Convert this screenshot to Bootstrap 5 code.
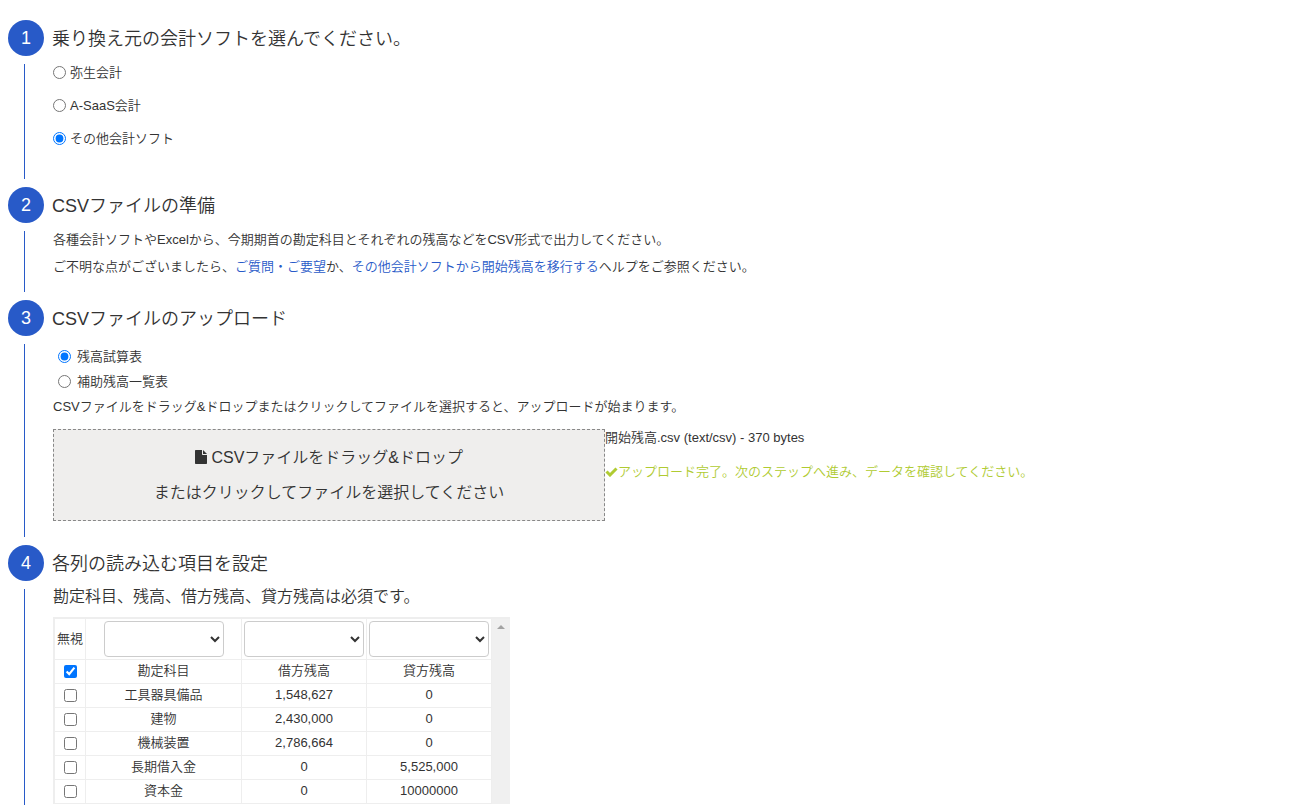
<!DOCTYPE html>
<html lang="ja">
<head>
<meta charset="utf-8">
<meta name="viewport" content="width=device-width, initial-scale=1">
<title>開始残高の移行</title>
<link href="https://cdn.jsdelivr.net/npm/bootstrap@5.3.0/dist/css/bootstrap.min.css" rel="stylesheet">
<style>
  :root { --brand: #285ac8; --line: #eee; --text-weight: 350; }
  body { font-family: "Liberation Sans", "Noto Sans CJK JP", sans-serif; font-size: 13px; font-weight: var(--text-weight); color: #333; background: #fff; }
  a { color: var(--brand); text-decoration: none; }
  input[type=radio], input[type=checkbox] { width: 13px; height: 13px; margin: 0; flex: none; accent-color: #0075ff; }
  .steps { padding: 20px 8px 0; }
  .step-rail { width: 36px; flex: none; }
  .step-number { width: 36px; height: 36px; background: var(--brand); color: #fff; font-size: 18px; }
  .step-line { width: 1px; margin: 8px 3px 8px 0; background: var(--brand); }
  .step:last-child .step-line { margin-bottom: 0; }
  .step-title { height: 36px; font-size: 18px; line-height: 38px; font-weight: var(--text-weight); margin: 0; padding-left: 8px; }
  .step-content { padding-left: 9px; }
  .software { padding-bottom: 32px; }
  .software label { height: 33px; }
  .prep { padding-top: 3px; padding-bottom: 20px; }
  .prep p { line-height: 27px; }
  .formats label, .hint { height: 25px; line-height: 25px; }
  .formats { padding: 8px 0 0 5px; }
  .formats label { gap: 6px; }
  .hint { margin-bottom: 10px; }
  .drop-zone { width: 552px; max-width: 100%; height: 92px; border: 1px dashed #888; background: #efeeed; color: #333; font-size: 16px; line-height: 35px; font-weight: var(--text-weight); }
  .drop-zone svg { vertical-align: -1px; }
  .upload-state { line-height: 18px; }
  .done { color: #b0cb32; }
  .required { font-size: 16px; line-height: 32px; }
  .preview { width: max-content; max-width: 100%; border: solid var(--line); border-width: 2px 0 0 1px; }
  .preview table { border-collapse: collapse; table-layout: fixed; width: 438px; line-height: 18px; text-align: center; }
  .preview th, .preview td { height: 24px; padding: 0; border: 1px solid var(--line); vertical-align: middle; font-weight: var(--text-weight); text-align: center; }
  .preview thead th { height: 40px; border-top: 0; }
  .preview tbody input { display: block; margin: 0 auto; }
  .preview select { display: block; width: 120px; height: 36px; margin: 0 auto; border: 1px solid #ccc; border-radius: 4px; background: #fff; color: #333; }
  .col-ignore { width: 31px; }
  .col-account { width: 156px; }
  .scroll-track { width: 18px; background: #f0f0f0; padding-top: 6px; }
</style>
</head>
<body>
<main class="steps d-flex flex-column min-vh-100">

  <section class="step d-flex">
    <div class="step-rail d-flex flex-column align-items-center">
      <span class="step-number rounded-circle d-flex align-items-center justify-content-center">1</span>
      <span class="step-line flex-grow-1"></span>
    </div>
    <div class="flex-grow-1">
      <h2 class="step-title">乗り換え元の会計ソフトを選んでください。</h2>
      <div class="step-content software">
        <label class="d-flex align-items-center gap-1"><input type="radio" name="software">弥生会計</label>
        <label class="d-flex align-items-center gap-1"><input type="radio" name="software">A-SaaS会計</label>
        <label class="d-flex align-items-center gap-1"><input type="radio" name="software" checked>その他会計ソフト</label>
      </div>
    </div>
  </section>

  <section class="step d-flex">
    <div class="step-rail d-flex flex-column align-items-center">
      <span class="step-number rounded-circle d-flex align-items-center justify-content-center">2</span>
      <span class="step-line flex-grow-1"></span>
    </div>
    <div class="flex-grow-1">
      <h2 class="step-title">CSVファイルの準備</h2>
      <div class="step-content prep">
        <p class="mb-0">各種会計ソフトやExcelから、今期期首の勘定科目とそれぞれの残高などをCSV形式で出力してください。</p>
        <p class="mb-0">ご不明な点がございましたら、<a href="#">ご質問・ご要望</a>か、<a href="#">その他会計ソフトから開始残高を移行する</a>ヘルプをご参照ください。</p>
      </div>
    </div>
  </section>

  <section class="step d-flex">
    <div class="step-rail d-flex flex-column align-items-center">
      <span class="step-number rounded-circle d-flex align-items-center justify-content-center">3</span>
      <span class="step-line flex-grow-1"></span>
    </div>
    <div class="flex-grow-1">
      <h2 class="step-title">CSVファイルのアップロード</h2>
      <div class="step-content pb-4">
        <div class="formats">
          <label class="d-flex align-items-center"><input type="radio" name="format" checked>残高試算表</label>
          <label class="d-flex align-items-center"><input type="radio" name="format">補助残高一覧表</label>
        </div>
        <p class="hint">CSVファイルをドラッグ&amp;ドロップまたはクリックしてファイルを選択すると、アップロードが始まります。</p>
        <div class="d-flex flex-wrap">
          <button type="button" class="drop-zone p-0">
            <svg width="12" height="14" viewBox="0 0 12 14" fill="currentColor" aria-hidden="true"><path d="M0 .7Q0 0 .7 0H7v4.300Q7 5 7.700 5H12v8.300q0 .7-.7.7H.7Q0 14 0 13.300zM8 0l4 4H8z"/></svg>
            CSVファイルをドラッグ&amp;ドロップ<br>またはクリックしてファイルを選択してください
          </button>
          <div class="upload-state">
            <p class="mb-3">開始残高.csv (text/csv) - 370 bytes</p>
            <p class="done mb-0 d-flex align-items-center"><svg width="13" height="10" viewBox="0 0 13 10" fill="none" stroke="currentColor" stroke-width="3" aria-hidden="true"><path d="M1.500 4.500l3.500 3.500L11.500 1.500"/></svg>アップロード完了。次のステップへ進み、データを確認してください。</p>
          </div>
        </div>
      </div>
    </div>
  </section>

  <section class="step d-flex flex-grow-1">
    <div class="step-rail d-flex flex-column align-items-center">
      <span class="step-number rounded-circle d-flex align-items-center justify-content-center">4</span>
      <span class="step-line flex-grow-1"></span>
    </div>
    <div class="flex-grow-1">
      <h2 class="step-title">各列の読み込む項目を設定</h2>
      <div class="step-content">
        <p class="required mb-1">勘定科目、残高、借方残高、貸方残高は必須です。</p>
        <div class="preview d-flex">
          <table>
            <colgroup><col class="col-ignore"><col class="col-account"><col><col></colgroup>
            <thead>
              <tr>
                <th scope="col">無視</th>
                <th scope="col"><select aria-label="1列目の項目"><option></option><option>勘定科目</option></select></th>
                <th scope="col"><select aria-label="2列目の項目"><option></option><option>借方残高</option></select></th>
                <th scope="col"><select aria-label="3列目の項目"><option></option><option>貸方残高</option></select></th>
              </tr>
            </thead>
            <tbody>
              <tr><td><input type="checkbox" aria-label="1行目を無視" checked></td><td>勘定科目</td><td>借方残高</td><td>貸方残高</td></tr>
              <tr><td><input type="checkbox" aria-label="2行目を無視"></td><td>工具器具備品</td><td>1,548,627</td><td>0</td></tr>
              <tr><td><input type="checkbox" aria-label="3行目を無視"></td><td>建物</td><td>2,430,000</td><td>0</td></tr>
              <tr><td><input type="checkbox" aria-label="4行目を無視"></td><td>機械装置</td><td>2,786,664</td><td>0</td></tr>
              <tr><td><input type="checkbox" aria-label="5行目を無視"></td><td>長期借入金</td><td>0</td><td>5,525,000</td></tr>
              <tr><td><input type="checkbox" aria-label="6行目を無視"></td><td>資本金</td><td>0</td><td>10000000</td></tr>
            </tbody>
          </table>
          <div class="scroll-track d-flex justify-content-center align-items-start" aria-hidden="true">
            <svg width="8" height="4" viewBox="0 0 8 4" fill="#a3a3a3"><path d="M0 4l4-4 4 4z"/></svg>
          </div>
        </div>
      </div>
    </div>
  </section>

</main>
<script src="https://cdn.jsdelivr.net/npm/bootstrap@5.3.0/dist/js/bootstrap.bundle.min.js"></script>
</body>
</html>
